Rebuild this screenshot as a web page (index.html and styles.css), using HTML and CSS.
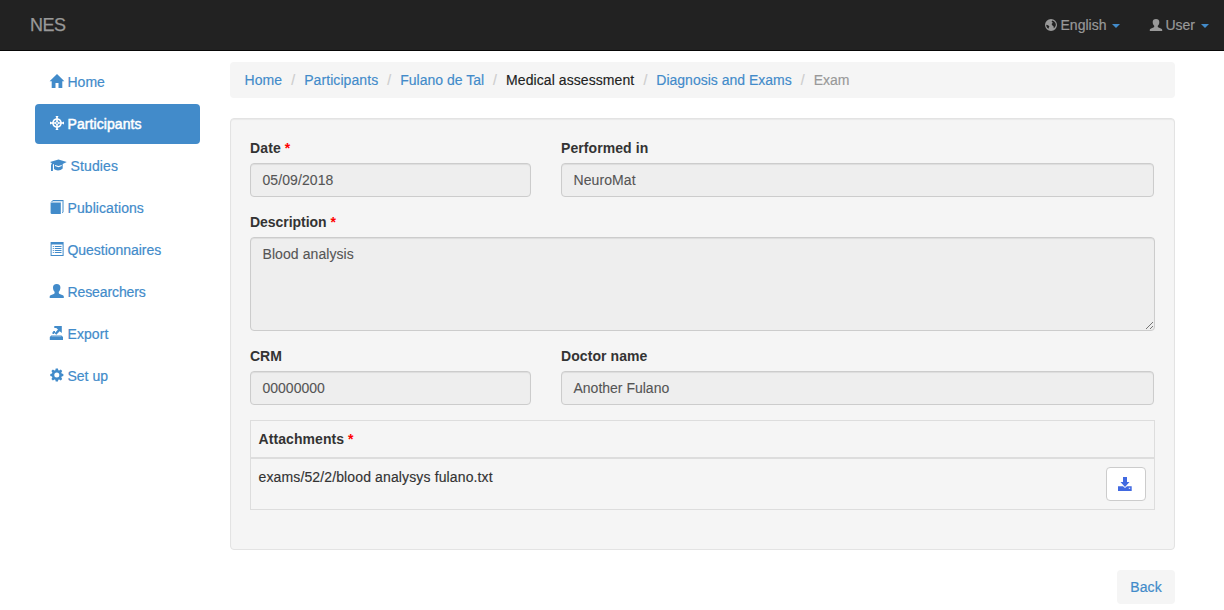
FILE: index.html
```html
<!DOCTYPE html>
<html lang="en">
<head>
<meta charset="utf-8">
<title>NES</title>
<link rel="stylesheet" href="styles.css">
</head>
<body>
<header class="navbar">
  <a class="brand">NES</a>
  <nav class="navbar-right">
    <a class="dropdown language"><svg class="icon" viewBox="0 0 14 14"><path fill-rule="evenodd" d="M7 1a6 6 0 1 0 0 12A6 6 0 0 0 7 1ZM8.200 2.400 10 3.200 11.500 5 11.900 7l-.8 2L9.800 10.200 9.500 8.300 8.200 7.300 7.600 6l1.200-1.300L7.600 3.500ZM2.400 6.800l1.700.5 1.300 1.100-.6 1.100-.2 1.300L3.200 9.700 2.300 8Z"/></svg><span>English</span><i class="caret"></i></a>
    <a class="dropdown"><svg class="icon" viewBox="0 0 14 14"><path d="M7 1C4.800 1 3.700 2.200 3.700 4c0 1.700.5 2.900 1.500 3.800.2.900-.1 1.500-.8 1.800L1.600 10.700Q.8 11 .8 11.800V13h12.400v-1.200q0-.8-.8-1.100L9.600 9.600c-.7-.3-1-.9-.8-1.800C9.800 6.900 10.300 5.700 10.300 4 10.300 2.200 9.200 1 7 1Z"/></svg><span>User</span><i class="caret"></i></a>
  </nav>
</header>
<div class="layout">
  <nav class="sidebar">
    <a class="nav-item"><svg class="icon" viewBox="0 0 14 14"><path d="M7 0 -.4 7.300H1.700V14H5.500V9h3v5h3.800V7.300h2.100Z"/></svg><span>Home</span></a>
    <a class="nav-item active"><svg class="icon" viewBox="0 0 14 14"><path fill-rule="evenodd" d="M5.500 0h3L7.800 1.500v.7a5 5 0 0 1 4 4h.7L14 5.500v3l-1.500-.7h-.7a5 5 0 0 1-4 4v.7L8.500 14h-3l.7-1.500v-.7a5 5 0 0 1-4-4h-.7L0 8.500v-3l1.500.7h.7a5 5 0 0 1 4-4v-.7ZM6.200 3.700a3.500 3.500 0 0 0-2.500 2.500h1.500l1-1ZM7.800 3.700v1.500l1 1h1.500a3.500 3.500 0 0 0-2.500-2.500ZM3.700 7.800a3.500 3.500 0 0 0 2.500 2.500V8.800l-1-1ZM8.800 7.800l-1 1v1.500a3.500 3.500 0 0 0 2.500-2.500ZM7 6 6 7l1 1 1-1Z"/></svg><span class="loose">Participants</span></a>
    <a class="nav-item"><svg class="icon icon-wide" viewBox="0 0 17 14"><path d="M8.500 1.500 0 4 1.900 5.300 1 7V13h1.900V6.600L4 6v5C6 13 10.500 13 12.700 10.500V6L16.800 4ZM5 7 8.500 8 11.700 7v1L8.500 9.200 5 8.100Z" fill-rule="evenodd"/></svg><span class="looser">Studies</span></a>
    <a class="nav-item"><svg class="icon" viewBox="0 0 14 14"><path d="M3 0h10.500v12L12 13.200V2H1Z"/><path d="M1 2.500h9.800V14H1.500L.6 13.200V2.300Z"/><path class="cut" d="M2.900 .9h9.600v11.200h-.7V1.800H2Z"/></svg><span class="loose">Publications</span></a>
    <a class="nav-item"><svg class="icon" viewBox="0 0 14 14"><path fill-rule="evenodd" d="M.6 0h13v14H.6ZM1.600 2.500v10.500h11V2.500Z"/><path d="M2.800 4h1v1h-1Zm2 0h6.700v1H4.800Zm-2 2h1v1h-1Zm2 0h6.700v1H4.800Zm-2 2h1v1h-1Zm2 0h6.700v1H4.800Zm-2 2h1v1h-1Zm2 0h6.700v1H4.800Z"/></svg><span class="tight">Questionnaires</span></a>
    <a class="nav-item"><svg class="icon" viewBox="0 0 14 14"><path d="M6.700 0C4.200 0 3 1.300 3 3.500c0 1.900.6 3.300 1.600 4.200.2 1.300-.1 1.900-.9 2.300L.6 11.200q-.9.400-.9 1.300V14h14.100v-1.500q0-.9-1-1.300L9.700 10c-.8-.4-1.100-1-.9-2.300 1-.9 1.600-2.300 1.600-4.200C10.400 1.300 9.200 0 6.700 0Z"/></svg><span class="tighter">Researchers</span></a>
    <a class="nav-item"><svg class="icon" viewBox="0 0 14 14"><path d="M4.300 0h7.500v7L9.700 5.200 6.300 8.700 4.600 7.200 8 3.600 6.200 2H4.300Z"/><path d="M3.500 5h1.500v1.300L3.800 8H2.500V6.500Z"/><path d="M1.200 9.400h10.300L13 10.900V14H-.2v-3.100Z"/><path class="cut" d="M1.700 10.200h9.500l.3.300H1.400Z"/></svg><span class="loose">Export</span></a>
    <a class="nav-item"><svg class="icon" viewBox="-.3 -.5 15 15"><path fill-rule="evenodd" d="M5.800 0h2.400l.4 1.800 1 .4L11.200 1.200l1.600 1.600-1 1.600.4 1 1.800.4v2.400l-1.800.4-.4 1 1 1.600-1.600 1.600-1.600-1-1 .4L8.200 14H5.800l-.4-1.800-1-.4-1.600 1-1.600-1.600 1-1.600-.4-1L0 8.200V5.800l1.800-.4.4-1-1-1.600 1.600-1.600 1.600 1 1-.4ZM7 4.300a2.700 2.700 0 1 0 0 5.400 2.700 2.700 0 0 0 0-5.400Z"/></svg><span>Set up</span></a>
  </nav>
  <main class="content">
    <ol class="breadcrumb">
      <li><a class="loose">Home</a></li>
      <li><a class="loose">Participants</a></li>
      <li><a>Fulano de Tal</a></li>
      <li class="plain"><span class="loose">Medical assessment</span></li>
      <li><a>Diagnosis and Exams</a></li>
      <li class="current"><span>Exam</span></li>
    </ol>
    <section class="well">
      <div class="row">
        <div class="field"><label><span class="looser">Date</span> <b class="required">*</b></label><div class="control"><span class="loose">05/09/2018</span></div></div>
        <div class="field"><label><span class="loose">Performed in</span></label><div class="control"><span class="loose">NeuroMat</span></div></div>
      </div>
      <div class="field"><label><span class="tight">Description</span> <b class="required">*</b></label>
        <div class="control area"><span class="loose">Blood analysis</span><svg class="grip" viewBox="0 0 9 9"><path d="M1 8 8 1M5 8 8 5"/></svg></div>
      </div>
      <div class="row">
        <div class="field"><label><span>CRM</span></label><div class="control"><span>00000000</span></div></div>
        <div class="field"><label><span class="loose">Doctor name</span></label><div class="control"><span>Another Fulano</span></div></div>
      </div>
      <div class="table">
        <div class="table-head"><span class="loose">Attachments</span> <b class="required">*</b></div>
        <div class="table-row"><span class="looser">exams/52/2/blood analysys fulano.txt</span>
          <a class="download"><svg class="icon" viewBox="0 0 14 14"><path d="M5 0h4v5h2.500L7 10 2.500 5H5Z"/><path fill-rule="evenodd" d="M0 9.300h5L7 11 9 9.300H13.700V14H0ZM10.800 10.700v1h1.400v-1Z"/></svg></a>
        </div>
      </div>
    </section>
    <div class="actions"><a class="back"><span class="looser">Back</span></a></div>
  </main>
</div>
</body>
</html>
```
FILE: styles.css
```css
* { box-sizing: border-box; }
body {
  margin: 0;
  height: 610px;
  overflow: hidden;
  background: #fff;
  color: #333;
  font: 14px/20px "Liberation Sans", Arial, sans-serif;
}
a { color: #428bca; text-decoration: none; }
span { white-space: nowrap; }
.icon { width: 14px; height: 14px; flex: none; fill: currentColor; overflow: visible; }
.icon-wide { width: 17px; }
.cut { fill: #fff; }
.loose { letter-spacing: 0.08px; }
.looser { letter-spacing: 0.13px; }
.tight { letter-spacing: -0.04px; }
.tighter { letter-spacing: -0.1px; }

.navbar {
  height: 51px;
  padding: 0 15px 0 30px;
  display: flex;
  justify-content: space-between;
  align-items: center;
  background: #222;
  border-bottom: 1px solid #080808;
}
.brand { color: #999; font-size: 18px; letter-spacing: -0.5px; -webkit-text-stroke: 0.25px #999; }
.navbar-right { display: flex; gap: 29px; }
.dropdown { display: flex; align-items: center; gap: 2px; color: #999; -webkit-text-stroke: 0.2px #999; }
.language .icon { margin-right: 1px; }
.caret {
  margin: 2px 0 0 4px;
  border: 4px solid transparent;
  border-top-color: #428bca;
  border-bottom: 0;
}

.layout { display: flex; gap: 30px; padding: 11px 49px 0 35px; }
.sidebar { width: 165px; display: flex; flex-direction: column; gap: 2px; }
.nav-item {
  height: 40px;
  padding: 0 15px;
  display: flex;
  align-items: center;
  gap: 3.5px;
  border-radius: 4px;
  -webkit-text-stroke: 0.2px #428bca;
}
.nav-item .icon { margin-bottom: 2px; }
.active { background: #428bca; color: #fff; -webkit-text-stroke: 0.5px #fff; }

.content { flex: 1; min-width: 0; }
.breadcrumb {
  display: flex;
  margin: 0 0 20px;
  padding: 8px 14.5px;
  list-style: none;
  background: #f5f5f5;
  border-radius: 4px;
  -webkit-text-stroke: 0.15px;
}
.breadcrumb li + li::before { content: "/"; color: #ccc; padding: 0 9.05px; }
.plain { color: #222; }
.current { color: #999; }

.well {
  height: 432px;
  padding: 19px;
  background: #f5f5f5;
  border: 1px solid #e3e3e3;
  border-radius: 4px;
  box-shadow: inset 0 1px 1px rgba(0, 0, 0, 0.05);
}
.row { display: grid; grid-template-columns: 281px 593px; gap: 30px; }
.field { margin-bottom: 15px; }
label { display: block; margin-bottom: 5px; font-weight: bold; }
.required { color: #f00; font-weight: bold; }
.control {
  height: 34px;
  padding: 6px 11.5px;
  color: #555;
  background: #eee;
  border: 1px solid #ccc;
  border-radius: 4px;
  box-shadow: inset 0 1px 1px rgba(0, 0, 0, 0.075);
  -webkit-text-stroke: 0.1px;
}
.area { position: relative; height: 94px; }
.grip {
  position: absolute;
  right: 0;
  bottom: 0;
  width: 9px;
  height: 9px;
  fill: none;
  stroke: #555;
  stroke-width: 0.8;
}
.table { border: 1px solid #ddd; }
.table-head { padding: 8px 7.5px; border-bottom: 2px solid #ddd; font-weight: bold; }
.table-row {
  height: 50px;
  padding: 8px 8px 8px 7.5px;
  display: flex;
  justify-content: space-between;
  -webkit-text-stroke: 0.15px;
}
.download {
  width: 40px;
  height: 34px;
  padding: 0 2px 1px 0;
  display: flex;
  align-items: center;
  justify-content: center;
  color: #4169e1;
  background: #fff;
  border: 1px solid #ccc;
  border-radius: 4px;
}
.actions { display: flex; justify-content: flex-end; margin-top: 20px; }
.back {
  width: 58px;
  padding: 7px 0;
  text-align: center;
  background: #f5f5f5;
  border-radius: 4px;
  -webkit-text-stroke: 0.2px;
}
```
